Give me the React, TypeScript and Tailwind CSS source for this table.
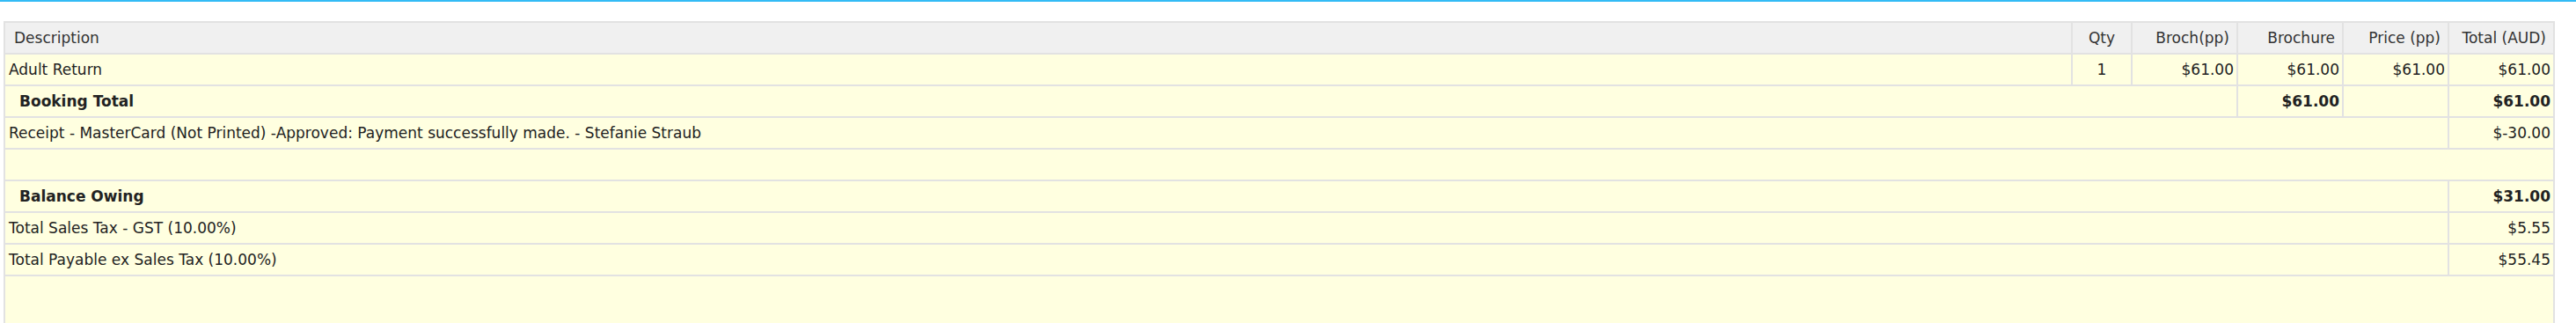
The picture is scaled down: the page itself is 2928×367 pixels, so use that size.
import React from "react";

const cell = "border-2 border-[#e2e2e2] px-1 h-[36px] align-middle";
const money = "text-right pr-[3px]";

export default function App() {
  return (
    <div className="min-h-[367px] bg-white font-['DejaVu_Sans',Verdana,sans-serif] text-[17px] leading-[24px] text-[#222]">
      <div className="h-[2px] bg-[#33bbf5]" />
      <div className="pt-[22px] pl-[4px] pr-[24px]">
        <table className="w-full border-collapse bg-[#ffffe0]">
          <colgroup>
            <col />
            <col className="w-[68px]" />
            <col className="w-[120px]" />
            <col className="w-[120px]" />
            <col className="w-[120px]" />
            <col className="w-[120px]" />
          </colgroup>
          <thead>
            <tr className="bg-[#f0f0f0] text-[#333]">
              <th className={`${cell} !h-[35px] pl-[10px] text-left font-normal`}>Description</th>
              <th className={`${cell} text-center font-normal`}>Qty</th>
              <th className={`${cell} pr-[8px] text-right font-normal`}>Broch(pp)</th>
              <th className={`${cell} pr-[8px] text-right font-normal`}>Brochure</th>
              <th className={`${cell} pr-[8px] text-right font-normal`}>Price (pp)</th>
              <th className={`${cell} pr-[8px] text-right font-normal`}>Total (AUD)</th>
            </tr>
          </thead>
          <tbody>
            <tr>
              <td className={cell}>Adult Return</td>
              <td className={`${cell} text-center`}>1</td>
              <td className={`${cell} ${money}`}>$61.00</td>
              <td className={`${cell} ${money}`}>$61.00</td>
              <td className={`${cell} ${money}`}>$61.00</td>
              <td className={`${cell} ${money}`}>$61.00</td>
            </tr>
            <tr className="font-bold">
              <td colSpan={3} className={`${cell} pl-[16px]`}>Booking Total</td>
              <td className={`${cell} ${money}`}>$61.00</td>
              <td className={cell} />
              <td className={`${cell} ${money}`}>$61.00</td>
            </tr>
            <tr>
              <td colSpan={5} className={cell}>
                Receipt - MasterCard (Not Printed) -Approved: Payment successfully made. - Stefanie Straub
              </td>
              <td className={`${cell} ${money}`}>$-30.00</td>
            </tr>
            <tr>
              <td colSpan={6} className={cell} />
            </tr>
            <tr className="font-bold">
              <td colSpan={5} className={`${cell} pl-[16px]`}>Balance Owing</td>
              <td className={`${cell} ${money}`}>$31.00</td>
            </tr>
            <tr>
              <td colSpan={5} className={cell}>Total Sales Tax - GST (10.00%)</td>
              <td className={`${cell} ${money}`}>$5.55</td>
            </tr>
            <tr>
              <td colSpan={5} className={cell}>Total Payable ex Sales Tax (10.00%)</td>
              <td className={`${cell} ${money}`}>$55.45</td>
            </tr>
            <tr>
              <td colSpan={6} className="border-2 border-[#e2e2e2] h-[80px]" />
            </tr>
          </tbody>
        </table>
      </div>
    </div>
  );
}
